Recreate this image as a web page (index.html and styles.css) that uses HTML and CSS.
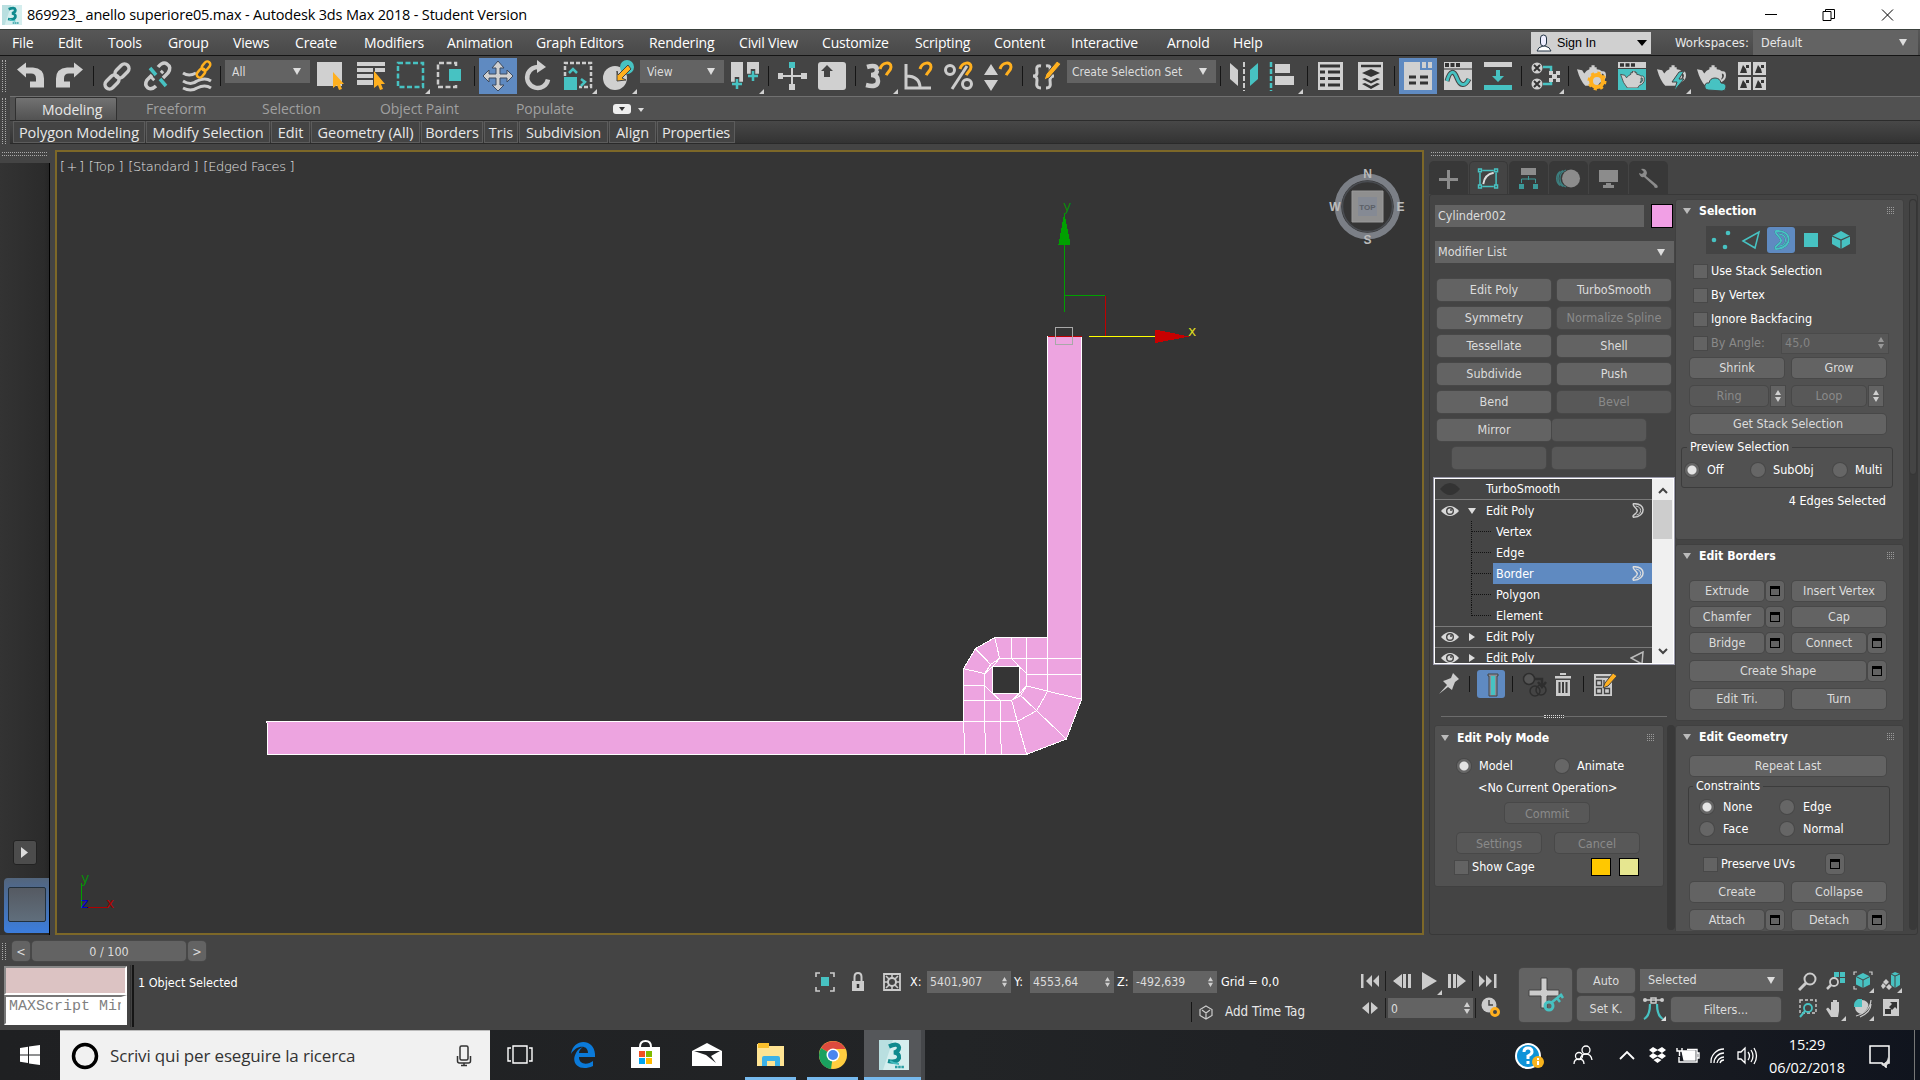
FILE: index.html
```html
<!DOCTYPE html>
<html lang="en">
<head>
<meta charset="utf-8">
<title>869923_ anello superiore05.max - Autodesk 3ds Max 2018 - Student Version</title>
<link rel="stylesheet" href="styles.css">
</head>
<body>
<svg class="defs" width="0" height="0">
  <symbol id="magnet" viewBox="0 0 16 18"><path d="M2 8C4 1 13 0 13 6c0 4-4 5-5 9" fill="none" stroke="#ffb01f" stroke-width="3"/><path d="M0 9l4 1M6 14l4 1.500" stroke="#454545" stroke-width="1.200"/></symbol>
  <symbol id="teapot" viewBox="0 0 28 20"><path fill-rule="evenodd" d="M0 4l5 1 2 3q2-3 5-4V2h2V0h3v2h2v2q3 0 5 2 4-1 4 4 0 5-6 7l-2 3H8Q3 15 0 4zM24 8q2 0 2 2 0 3-3 4 2-3 1-6z"/></symbol>
  <symbol id="border" viewBox="0 0 16 20"><path d="M2 1c17-1 17 17 0 18C-1 16 8 14 7 10S0 4 2 1z" fill="none" stroke-width="2"/><path d="M5 4c9 1 8 11 1 12" fill="none" stroke-width="1.300"/></symbol>
  <symbol id="eye" viewBox="0 0 18 10"><path d="M0 5Q9-5 18 5 9 15 0 5z" fill="#d8d8d8"/><circle cx="9" cy="5" r="4" fill="#444"/><circle cx="9" cy="5" r="2.600" fill="#d8d8d8"/><circle cx="10" cy="4" r="1" fill="#444"/></symbol>
  <symbol id="spin" viewBox="0 0 6 12"><path d="M0 5l3-5 3 5zM0 7l3 5 3-5z" fill="#d0d0d0"/></symbol>
  <symbol id="max" viewBox="0 0 30 30"><path d="M0 0h30v30H0z" fill="#d5eeee"/><path d="M0 0h14L4 30H0z" fill="#b9dfe0"/><path d="M10 6.500q9-4 10 1 0 4-5 5 6 1 5 5.500-2 5-11 3" fill="none" stroke="#108a8e" stroke-width="4.200"/><path d="M11 21q4 3 9 3" stroke="#45bcbf" stroke-width="2" fill="none"/><path d="M16 27h9" stroke="#2a9ea2" stroke-width="2.500" stroke-dasharray="2.500 .7"/></symbol>
</svg>

<header class="titlebar">
  <svg class="app-icon" width="20" height="20"><use href="#max"/></svg>
  <span class="title">869923_ anello superiore05.max - Autodesk 3ds Max 2018 - Student Version</span>
  <svg class="win-buttons" width="140" height="28" fill="none" stroke="#000"><path d="M5 13.500h12M63 10.500h8v9h-8zM65.500 10V8.500h9v9H71M122 8.500l11 11M133 8.500l-11 11"/></svg>
</header>

<nav class="menubar">
  <div class="menus"><span>File</span><span>Edit</span><span>Tools</span><span>Group</span><span>Views</span><span>Create</span><span>Modifiers</span><span>Animation</span><span>Graph Editors</span><span>Rendering</span><span>Civil View</span><span>Customize</span><span>Scripting</span><span>Content</span><span>Interactive</span><span>Arnold</span><span>Help</span></div>
  <div class="signin"><svg width="16" height="18"><path d="M1 17q1-4 6-5h2q5 1 6 5z" fill="#fff" stroke="#234"/><rect x="4.500" y="1" width="6" height="11" rx="3" fill="#eef" stroke="#234"/></svg><span>Sign In</span><i class="tri black"></i></div>
  <span class="ws-label">Workspaces:</span>
  <div class="workspace"><span>Default</span><i class="tri"></i></div>
</nav>

<div class="toolbar">
  <i class="vgrip"></i>
  <svg class="tool" viewBox="0 0 40 40"><path d="M7 12.500l9-7v5h7q11 1 11 11v9H28h-8v-6h6v-3q0-5-5-5h-5v4z" transform="translate(0 1)"/></svg>
  <svg class="tool" viewBox="0 0 40 40"><path d="M7 12.500l9-7v5h7q11 1 11 11v9H28h-8v-6h6v-3q0-5-5-5h-5v4z" transform="matrix(-1 0 0 1 40 1)"/></svg>
  <i class="sep"></i>
  <svg class="tool" viewBox="0 0 40 40"><g class="ln" stroke-width="3.500"><rect x="-8" y="-4.500" width="16" height="9" rx="4.500" transform="translate(15 26) rotate(-45)"/><rect x="-8" y="-4.500" width="16" height="9" rx="4.500" transform="translate(25 15) rotate(-45)"/></g></svg>
  <svg class="tool" viewBox="0 0 40 40"><g class="ln" stroke-width="3.500"><path d="M19 30q-4 4-8 2-4-3-1-8l5-5M21 11q5-6 9-3 5 3 1 9l-5 5M15 24l2-2M24 17l2-2"/><path class="tls" d="M13 12l6 7M23 23l6 7"/></g></svg>
  <svg class="tool" viewBox="0 0 40 40"><g class="ln" stroke-width="3"><path d="M6 17q6 4 13 0M6 25q8 5 14 0 8-4 14 0M6 32q8 4 14 0 8-4 14 0"/><g stroke="#ffb01f" stroke-width="2.500"><rect x="-5" y="-3" width="10" height="6" rx="3" transform="translate(24 17) rotate(-50)"/><rect x="-5" y="-3" width="10" height="6" rx="3" transform="translate(29 10) rotate(-50)"/></g></g></svg>
  <i class="sep"></i>
  <div class="drop d-all"><span>All</span><i class="tri"></i></div>
  <svg class="tool" viewBox="0 0 40 40"><path d="M6 6h25v24H6z"/><path class="or" d="M22 16v16l4-3 2 5 3-1-2-5h4z"/></svg>
  <svg class="tool" viewBox="0 0 40 40"><path d="M6 6h28v4H6zM6 12h16v4H6zM6 18h16v4H6zM6 24h16v5H6zM24 12h10v4H24z"/><path class="or" d="M23 15v17l4-3 2 5 3-1-2-5h4z"/></svg>
  <svg class="tool" viewBox="0 0 40 40"><path class="tls" d="M7 7h25v24H7z" stroke-width="2.500" stroke-dasharray="5 2.500"/><path d="M34 38h5v-5z"/></svg>
  <svg class="tool" viewBox="0 0 40 40"><path class="ln" d="M25 10V7H7v24h18v-4" stroke-width="2.500" stroke-dasharray="5 2.500"/><path class="tl" d="M18 13h12v12H18z"/></svg>
  <i class="sep"></i>
  <svg class="tool on" viewBox="0 0 40 40"><path d="M20 5l6 7h-4v6h7v-4l6 6-6 6v-4h-7v7h4l-6 6-6-6h4v-7h-7v4l-6-6 6-6v4h7v-6h-4z" stroke="#3c4a60"/></svg>
  <svg class="tool" viewBox="0 0 40 40"><path class="ln" d="M23 11.500a10.500 10.500 0 1 0 7 12" stroke-width="4.500"/><path d="M19 4l9 7-9 6z"/></svg>
  <svg class="tool" viewBox="0 0 40 40"><path class="ln" d="M7 20V7h26v24H21" stroke-width="2.500" stroke-dasharray="4 2"/><path class="tl" d="M6 21h13v13H6z"/><path class="tls" d="M11 17l4-4 4 4M23 23l4 3-4 4" stroke-width="2.500"/><path d="M34 38h5v-5z"/></svg>
  <svg class="tool" viewBox="0 0 40 40"><circle cx="17" cy="22" r="12"/><circle class="tl" cx="29" cy="11" r="7"/><path class="or" d="M30 9L20 19l-1-4v10l9-1-4-2 9-9z" stroke="#444"/><path d="M34 38h5v-5z"/></svg>
  <div class="drop d-view"><span>View</span><i class="tri"></i></div>
  <svg class="tool" viewBox="0 0 40 40"><path d="M6 6h12v21H6zM22 6h12v14H22z"/><path d="M12 21v14M6 28h12M28 13v14M22 20h12" fill="none" stroke="#444" stroke-width="4.500"/><path class="tls" d="M12 23v10M7 28h10M28 15v10M23 20h10" stroke-width="2.500"/><path d="M34 38h5v-5z"/></svg>
  <i class="sep"></i>
  <svg class="tool" viewBox="0 0 40 40"><path d="M6 17h5v2h8v-7h2v7h8v-2h6v6h-6v-2h-8v7h2v6h-6v-6h2v-7h-8v2H6z"/><path class="tl" d="M17 6h6v6h-6z"/></svg>
  <svg class="tool" viewBox="0 0 40 40"><rect x="6" y="6" width="28" height="28" rx="3"/><path d="M9 15l6-6 6 6h-3v6h-6v-6z" fill="#444"/></svg>
  <i class="sep"></i>
  <svg class="tool" viewBox="0 0 40 40"><path class="ln" d="M8 11q10-3 10 3 0 5-6 5 7 0 7 6 0 7-12 4" stroke-width="4.500"/><use href="#magnet" x="19" y="5" width="16" height="18"/><path d="M34 38h5v-5z"/></svg>
  <svg class="tool" viewBox="0 0 40 40"><path class="ln" d="M7 8v24h25M7 20q14 0 14 12" stroke-width="3"/><use href="#magnet" x="19" y="5" width="16" height="18"/></svg>
  <svg class="tool" viewBox="0 0 40 40"><g class="ln" stroke-width="3"><circle cx="11" cy="14" r="4.500"/><circle cx="28" cy="28" r="4.500"/><path d="M28 10L13 33"/></g><use href="#magnet" x="19" y="5" width="16" height="18"/></svg>
  <svg class="tool" viewBox="0 0 40 40"><path d="M5 19l7-11 7 11zM5 24h14l-7 11z"/><use href="#magnet" x="19" y="5" width="16" height="18"/></svg>
  <i class="sep"></i>
  <svg class="tool" viewBox="0 0 40 40"><path class="ln" d="M15 10c-6-1-4 4-4 7 0 2-2 3-4 3 2 0 4 1 4 4 0 3-2 8 4 8M20 10c6-1 4 4 4 7 0 2 2 3 4 3-2 0-4 1-4 4 0 3 2 8-4 8" stroke-width="3"/><path class="or" d="M31 5l4 3-12 14-5 2 2-6z" stroke="#444"/></svg>
  <div class="drop d-set"><span>Create Selection Set</span><i class="tri"></i></div>
  <i class="sep"></i>
  <svg class="tool" viewBox="0 0 40 40"><path d="M6 7l8 7v16l-8-7z"/><path class="tl" d="M34 7l-8 7v16l8-7z"/><path class="ln" d="M20 6v29" stroke-width="2" stroke-dasharray="5 2"/></svg>
  <svg class="tool" viewBox="0 0 40 40"><path class="tls" d="M7 6v29" stroke-width="2.500" stroke-dasharray="5 2"/><path d="M11 8h15v9H11zM11 20h19v9H11z"/><path d="M34 38h5v-5z"/></svg>
  <i class="sep"></i>
  <svg class="tool" viewBox="0 0 40 40"><path d="M7 6h25v28H7z"/><path class="dk" d="M9 10h20M9 16h5M17 16h12M9 22.500h5M17 22.500h12M9 29h5M17 29h12" stroke-width="3"/></svg>
  <svg class="tool" viewBox="0 0 40 40"><path d="M7 6h25v28H7z"/><path class="dk" d="M10 10h20" stroke-width="2.500"/><path d="M11 17l9-4 9 4-9 4zM11 23l3-1 6 3 6-3 3 1-9 4.500zM11 28l3-1 6 3 6-3 3 1-9 5z" fill="#333"/></svg>
  <i class="sep"></i>
  <svg class="tool on" viewBox="0 0 40 40"><path d="M6 6h16v8h12v20H6z"/><path d="M24 6h4v6h-4zM30 6h4v6h-4z"/><path class="dk" d="M11 21h7M22 21h8M11 27h7M22 27h8" stroke-width="3"/></svg>
  <svg class="tool" viewBox="0 0 40 40"><path d="M6 6h28v28H6z"/><path class="dk" d="M7 9h16" stroke-width="4" stroke-dasharray="4 1.500"/><path class="dk" d="M6 13h28" stroke-width="1"/><path d="M9 25c3-11 7-11 10-3s8 9 12 1" fill="none" stroke="#444" stroke-width="5"/><path class="tls" d="M9 25c3-11 7-11 10-3s8 9 12 1" stroke-width="3"/></svg>
  <svg class="tool" viewBox="0 0 40 40"><path d="M6 6h28v5H6z"/><path class="tl" d="M6 29h28v5H6zM18 14h4v6h4l-6 6-6-6h4z"/></svg>
  <i class="sep"></i>
  <svg class="tool" viewBox="0 0 40 40"><circle cx="12" cy="12" r="5.500"/><circle cx="12" cy="28" r="5.500"/><path class="dk" d="M9 9l6 6M15 9l-6 6M9 25l6 6M15 25l-6 6" stroke-width="2"/><path class="tls" d="M18 11h8v5M18 28h8v-4" stroke-width="2.500"/><path d="M24 15h4v3h3v-3h4v4h-3v3h3v4h-4v-3h-3v3h-4v-4h3v-3h-3z"/><path d="M34 38h5v-5z"/></svg>
  <i class="sep"></i>
  <svg class="tool" viewBox="0 0 40 40"><use href="#teapot" x="5" y="9" width="29" height="21"/><circle cx="25" cy="25" r="6" fill="none" stroke="#ffb01f" stroke-width="4"/><circle cx="25" cy="25" r="8" fill="none" stroke="#ffb01f" stroke-width="3" stroke-dasharray="3 3.300"/></svg>
  <svg class="tool" viewBox="0 0 40 40"><path d="M6 6h28v6H6z"/><path class="dk" d="M8 9h15" stroke-width="3.500" stroke-dasharray="4 1.500"/><path class="tl" d="M6 13h28v21H6z"/><use href="#teapot" x="8" y="15" width="25" height="17" stroke="#444"/></svg>
  <svg class="tool" viewBox="0 0 40 40"><use href="#teapot" x="5" y="9" width="29" height="21"/><path class="tl" d="M27 16l-7 10h5l-3 9 10-12h-5l5-8z" stroke="#444"/><path d="M34 38h5v-5z"/></svg>
  <svg class="tool" viewBox="0 0 40 40"><use href="#teapot" x="5" y="9" width="29" height="21"/><path class="tl" d="M16 34q-4-1-3-5 1-3 4-2 1-5 6-5t6 5q5 0 5 4t-4 4z" stroke="#444"/></svg>
  <svg class="tool" viewBox="0 0 40 40"><path d="M6 6h13v13H6zM21 6h13v13H21zM6 21h13v13H6zM21 21h13v13H21z"/><path d="M8 17l3-8 3 4 1 4zM23 17l3-8 3 4 1 4zM8 32l3-8 3 4 1 4zM23 32l3-8 3 4 1 4zM14 9h3v3h-3zM29 9h3v3h-3zM14 24h3v3h-3zM29 24h3v3h-3z" fill="#333"/></svg>
</div>

<div class="ribbon">
  <i class="vgrip"></i>
  <div class="ribbon-body">
    <div class="tabs"><span class="active">Modeling</span><span>Freeform</span><span>Selection</span><span>Object Paint</span><span>Populate</span><i class="pill"><i></i></i><i class="tri sm"></i></div>
    <div class="panels"><span>Polygon Modeling</span><span>Modify Selection</span><span>Edit</span><span>Geometry (All)</span><span>Borders</span><span>Tris</span><span>Subdivision</span><span>Align</span><span>Properties</span></div>
  </div>
</div>

<main class="main">
  <aside class="left">
    <i class="hgrip"></i>
    <div class="left-body">
      <div class="play-btn"><svg width="8" height="12"><path d="M0 0l7 5.500L0 11z" fill="#ddd"/></svg></div>
      <div class="layout-btn"><i></i></div>
    </div>
  </aside>
  <section class="viewport">
    <div class="vp-label"><span class="plus">[ + ]</span><span>[Top ]</span><span>[Standard ]</span><span>[Edged Faces ]</span></div>
    <svg class="scene" viewBox="57 152 1365 781" width="1365" height="781">
      <g transform="translate(930 180) scale(.33333 .38265)" shape-rendering="crispEdges" stroke-width="1">
        <path fill="#eda4e0" stroke="#fff" fill-rule="evenodd" vector-effect="non-scaling-stroke" d="M353 409H455V1357L409 1461 290 1501H-1987V1430L-1990 1415H101V1277L136 1225 194 1196H353zM188 1272V1342H268V1272z"/>
        <path fill="none" stroke="#fff" vector-effect="non-scaling-stroke" d="M244 1196V1250L268 1272 290 1290M290 1196V1322M353 1196V1336M194 1196L209 1250H455M290 1293H455M136 1225L182 1266M101 1277L164 1290 182 1266 209 1250 188 1272 164 1290V1415L167 1501M101 1321H164L188 1342 211 1360V1415L214 1501M101 1360H245L268 1342 290 1322 272 1347 245 1360 262 1415 290 1501M101 1415H262L320 1387 353 1336M101 1415L104 1501M272 1347L320 1387 409 1461M290 1322L353 1336 455 1357"/>
        <path fill="none" stroke="#c00000" vector-effect="non-scaling-stroke" d="M353 409H455M526 302V409"/>
        <path fill="none" stroke="#00a000" vector-effect="non-scaling-stroke" d="M403 171V345M403 302H525"/>
        <path fill="none" stroke="#ff0" vector-effect="non-scaling-stroke" d="M477 409H676"/>
        <path fill="none" stroke="#a8a8a8" vector-effect="non-scaling-stroke" d="M376 385H428V430H376z"/>
        <path fill="#00a000" d="M403 85L385 171H422z"/><path fill="#c80000" d="M676 391V426L778 409z"/>
      </g>
      <g class="axis"><text x="1063" y="211" fill="#0b8a0b">y</text><text x="1188" y="336" fill="#d8d820">x</text>
      <path d="M81.500 883v25" stroke="#00a000"/><path d="M82 907.500h26" stroke="#b00000"/><text x="81" y="883" fill="#0b8a0b">y</text><text x="106" y="908" fill="#b00000">x</text><text x="81" y="908" fill="#0000d0">z</text></g>
      <g><circle cx="1367.500" cy="206.500" r="29.500" fill="none" stroke="#7b7f86" stroke-width="6.500"/><circle cx="1367.500" cy="206.500" r="25" fill="none" stroke="#4a4d52" stroke-width="1.500"/><path d="M1352 191h31v31h-31z" fill="#8f8f8f" stroke="#9a9a9a"/><path d="M1358 197h19v19h-19z" fill="#858a94"/><text class="cube" x="1367.500" y="209.500" text-anchor="middle">TOP</text>
      <g class="compass" text-anchor="middle"><text x="1367.500" y="178">N</text><text x="1367.500" y="243.500">S</text><text x="1335" y="211">W</text><text x="1400.500" y="211">E</text></g></g>
    </svg>
  </section>
  <aside class="command">
    <i class="hgrip"></i>
    <div class="cmd-tabs">
      <svg viewBox="0 0 39 33"><path d="M18 8h3v8h8v3h-8v8h-3v-8h-8v-3h8z" transform="translate(0 1)"/></svg>
      <svg class="active" viewBox="0 0 39 33"><g transform="translate(1 1)"><g class="tls" stroke-width="1.600"><path d="M8 6h3v3H8zM25 6h3v3h-3zM8 23h3v3H8zM25 23h3v3h-3zM12 7.500h12M12 24.500h12M9.500 10v12M26.500 10v12"/></g><path d="M13 22q1-10 11-12" fill="none" stroke="#ddd" stroke-width="2"/></g></svg>
      <svg viewBox="0 0 39 33"><path d="M12 7h15v7H12z"/><path d="M10 23h5v5h-5zM24 23h5v5h-5z" fill="#3c9a99"/><path d="M19.500 15v4M12.500 22v-4h14v4" fill="none" stroke="#3c9a99"/></svg>
      <svg viewBox="0 0 39 33"><circle cx="22" cy="17.500" r="9"/><path d="M14 9.500a9 9 0 0 0 0 16M11 10.500a9 9 0 0 0 0 14M17 9a9 9 0 0 0 0 17" fill="none" stroke="#3c7e7e" stroke-width="1.300"/></svg>
      <svg viewBox="0 0 39 33"><path d="M10 9h19v12H10zM17 22h5v2h3v3H14v-3h3z"/></svg>
      <svg viewBox="0 0 39 33"><path d="M12 8q5-1 6 4l-1 3 11 9q2 3-1 3-2 0-2-2L15 16q-4 1-5-4l3 1 2-2z"/></svg>
    </div>
    <div class="cmd-body">
      <div class="mod-col">
        <div class="name-row"><div class="field">Cylinder002</div><i class="swatch pink"></i></div>
        <div class="modlist"><span>Modifier List</span><i class="tri"></i></div>
        <div class="mod-buttons">
          <b>Edit Poly</b><b>TurboSmooth</b><b>Symmetry</b><b class="off">Normalize Spline</b><b>Tessellate</b><b>Shell</b><b>Subdivide</b><b>Push</b><b>Bend</b><b class="off">Bevel</b>
        </div>
        <div class="mod-row r6"><b>Mirror</b><b class="off"></b></div>
        <div class="mod-row r7"><b class="off"></b><b class="off"></b></div>
        <div class="stack">
          <div class="stack-list">
            <div class="st"><svg width="20" height="12" viewBox="0 0 20 12"><path d="M0 6Q10-6 20 6 10 18 0 6z" fill="#333"/></svg><span>TurboSmooth</span></div>
            <div class="st"><svg width="18" height="10"><use href="#eye"/></svg><i class="tri sm"></i><span>Edit Poly</span><svg class="sub-ic" width="12" height="15"><use href="#border" stroke="#ccc"/></svg></div>
            <div class="tree">
              <div><i></i><span>Vertex</span></div><div><i></i><span>Edge</span></div><div class="sel"><i></i><span>Border</span><svg class="sub-ic" width="12" height="15"><use href="#border" stroke="#ddd"/></svg></div><div><i></i><span>Polygon</span></div><div><i></i><span>Element</span></div>
            </div>
            <div class="st top"><svg width="18" height="10"><use href="#eye"/></svg><i class="tri right"></i><span>Edit Poly</span></div>
            <div class="st top"><svg width="18" height="10"><use href="#eye"/></svg><i class="tri right"></i><span>Edit Poly</span><svg class="sub-ic" width="14" height="14"><path d="M1 7l12-6-1 12z" fill="none" stroke="#bbb" stroke-width="1.500"/></svg></div>
          </div>
          <div class="stack-scroll"><svg width="10" height="7"><path d="M1 6l4-4 4 4" fill="none" stroke="#444" stroke-width="2"/></svg><i></i><svg width="10" height="7"><path d="M1 1l4 4 4-4" fill="none" stroke="#444" stroke-width="2"/></svg></div>
        </div>
        <div class="stack-tools">
          <svg width="30" height="28"><path d="M0 24l8-9-4-4 3-1 5-2 2-5 6 6-4 3-2 5-1 3-4-3z" fill="#ccc"/></svg>
          <i class="sep"></i>
          <svg class="on" width="28" height="28"><path d="M11 4h10v2h-1v20h-8V6h-1z" fill="#8a8f98" stroke="#444"/><path d="M14 6h4v19h-4z" fill="#47c2c2"/></svg>
          <i class="sep"></i>
          <svg width="40" height="28"><g fill="none" stroke="#2e2e2e" stroke-width="1.500"><circle cx="9" cy="9" r="5.500" fill="#555"/><circle cx="15" cy="21" r="5"/><circle cx="21" cy="20" r="5"/><path d="M14 9h8v7M18 12l4 5 4-5" stroke-width="2.500"/></g></svg>
          <svg width="28" height="28"><path d="M2 6h16v2.500H2zM7 3h6v2H7zM3 10h14v16H3z" fill="#ccc"/><path d="M6.500 12v11M10 12v11M13.500 12v11" stroke="#3d3d3d" stroke-width="2"/></svg>
          <i class="sep"></i>
          <svg width="30" height="28"><g transform="translate(1 0)"><path d="M3 4h18v22H3z" fill="#ccc"/><path d="M5 7h14M5.500 10.500h5v5h-5zM5.500 18.500h5v5h-5zM13.500 18.500h5v5h-5zM13 10v6" fill="none" stroke="#444" stroke-width="1.300"/><path d="M22 3l4 3-9 10-5 2 2-5z" fill="#ffb01f" stroke="#444"/></g></svg>
        </div>
        <div class="splitter"><i></i></div>
        <div class="rollup poly-mode">
          <h3><i class="tri sm"></i>Edit Poly Mode<i class="dots"></i></h3>
          <div class="row pm1"><i class="radio on"></i><span>Model</span><i class="radio"></i><span>Animate</span></div>
          <div class="row pm2">&lt;No Current Operation&gt;</div>
          <div class="row pm3"><b class="off">Commit</b></div>
          <div class="row pm4"><b class="off">Settings</b><b class="off">Cancel</b></div>
          <div class="row pm5"><i class="check"></i><span>Show Cage</span><i class="swatch gold"></i><i class="swatch pale"></i></div>
        </div>
      </div>
      <i class="mid-scroll"></i>
      <div class="roll-col">
        <div class="rollup r-sel">
          <h3><i class="tri sm"></i>Selection<i class="dots"></i></h3>
          <div class="sub-icons">
            <svg viewBox="0 0 30 28"><g class="tl"><circle cx="8" cy="14" r="2.300"/><circle cx="22" cy="7" r="2.300"/><circle cx="19" cy="21" r="2.300"/></g></svg>
            <svg viewBox="0 0 30 28"><path class="tls" d="M7 15L23 6l-4 16z" stroke-width="1.500"/></svg>
            <svg class="on" viewBox="0 0 28 26"><use href="#border" x="6" y="3" width="18" height="20" stroke="#2c4a60" stroke-width="4"/><use href="#border" x="6" y="3" width="18" height="20" stroke="#47c2c2"/></svg>
            <svg viewBox="0 0 30 28"><path class="tl" d="M8 7h14v14H8z"/></svg>
            <svg viewBox="0 0 30 28"><path class="tl" d="M15 5l9 5v8l-9 5-9-5v-8z"/><path d="M6 10l9 4 9-4M15 14v9" fill="none" stroke="#444" stroke-width="1.200"/></svg>
          </div>
          <div class="row ck"><i class="check"></i><span>Use Stack Selection</span></div>
          <div class="row ck"><i class="check"></i><span>By Vertex</span></div>
          <div class="row ck"><i class="check"></i><span>Ignore Backfacing</span></div>
          <div class="row ck dim"><i class="check"></i><span>By Angle:</span><div class="angle"><span>45,0</span><svg width="6" height="12"><use href="#spin"/></svg></div></div>
          <div class="row bt s1"><b class="w94">Shrink</b><b class="w94">Grow</b></div>
          <div class="row bt s2"><b class="off w78">Ring</b><b class="spin"><svg width="6" height="12"><use href="#spin"/></svg></b><b class="off w74">Loop</b><b class="spin"><svg width="6" height="12"><use href="#spin"/></svg></b></div>
          <div class="row bt s3"><b class="w196">Get Stack Selection</b></div>
          <fieldset class="preview"><legend>Preview Selection</legend><i class="radio on"></i><span>Off</span><i class="radio"></i><span>SubObj</span><i class="radio"></i><span>Multi</span></fieldset>
          <div class="edges">4 Edges Selected</div>
        </div>
        <div class="rollup r-borders">
          <h3><i class="tri sm"></i>Edit Borders<i class="dots"></i></h3>
          <div class="row bt"><b class="w74">Extrude</b><b class="opt"><i></i></b><b class="w94">Insert Vertex</b></div>
          <div class="row bt"><b class="w74">Chamfer</b><b class="opt"><i></i></b><b class="w94">Cap</b></div>
          <div class="row bt"><b class="w74">Bridge</b><b class="opt"><i></i></b><b class="w74">Connect</b><b class="opt"><i></i></b></div>
          <div class="row bt wide"><b class="w176">Create Shape</b><b class="opt"><i></i></b></div>
          <div class="row bt wide"><b class="w94">Edit Tri.</b><b class="w94">Turn</b></div>
        </div>
        <div class="rollup r-geo">
          <h3><i class="tri sm"></i>Edit Geometry<i class="dots"></i></h3>
          <div class="row bt g1"><b class="w196">Repeat Last</b></div>
          <fieldset class="constraints"><legend>Constraints</legend><i class="radio on"></i><span>None</span><i class="radio"></i><span>Edge</span><i class="radio"></i><span>Face</span><i class="radio"></i><span>Normal</span></fieldset>
          <div class="row g2"><i class="check"></i><span>Preserve UVs</span><b class="opt"><i></i></b></div>
          <div class="row bt g3"><b class="w94">Create</b><b class="w94">Collapse</b></div>
          <div class="row bt g4"><b class="w74">Attach</b><b class="opt"><i></i></b><b class="w74">Detach</b><b class="opt"><i></i></b></div>
        </div>
      </div>
      <div class="far-scroll"><i></i></div>
    </div>
  </aside>
</main>

<div class="timeline"><i class="vgrip"></i><b class="nudge">&lt;</b><b class="slider">0 / 100</b><b class="nudge">&gt;</b></div>

<footer class="status">
  <div class="listener"><div class="macro"></div><div class="mini">MAXScript Mini</div></div>
  <i class="divider"></i>
  <div class="prompt">1 Object Selected</div>
  <div class="coords">
    <div class="coord-row">
      <svg width="20" height="20"><path class="tl" d="M6 5h8v9H6z"/><path d="M1 5V1h4M15 1h4v4M19 15v4h-4M5 19H1v-4" fill="none" stroke="#ccc" stroke-width="1.600"/></svg>
      <svg width="14" height="20"><path d="M1 9h12v10H1z" fill="#ccc"/><path d="M3.500 9V5q0-4 3.500-4t3.500 4v4" fill="none" stroke="#ccc" stroke-width="2"/><path d="M7 12v4" stroke="#333" stroke-width="2.500"/></svg>
      <svg width="18" height="18"><path d="M1 1h16v16H1z" fill="none" stroke="#ccc" stroke-width="1.800"/><path d="M9 1v16M1 9h16M3 3l3 3M15 3l-3 3M3 15l3-3M15 15l-3-3" stroke="#ccc" stroke-width="1.600"/><circle cx="9" cy="9" r="4" fill="#444" stroke="#ccc" stroke-width="2"/></svg>
      <span class="lab">X:</span><div class="num"><span>5401,907</span><svg width="5" height="12"><use href="#spin"/></svg></div>
      <span class="lab">Y:</span><div class="num"><span>4553,64</span><svg width="5" height="12"><use href="#spin"/></svg></div>
      <span class="lab">Z:</span><div class="num"><span>-492,639</span><svg width="5" height="12"><use href="#spin"/></svg></div>
      <span class="grid-lab">Grid = 0,0</span>
    </div>
    <div class="tag-row"><i></i><svg width="14" height="15"><path d="M7 1l6 3.500v6L7 14l-6-3.500v-6zM3 5l4 3 4-3M7 8v6" fill="none" stroke="#ccc" stroke-width="1.200"/></svg><span>Add Time Tag</span></div>
  </div>
  <div class="play">
    <svg width="146" height="64" fill="#ccc"><path d="M1 14h2.500v14H1zM12 15v12l-6-6zM19 15v12l-6-6zM42 14v14l-9-7zM43 14h3v14h-3zM48 14h3v14h-3zM62 12l15 9-15 9zM77 35h5v-5zM88 14h3v14h-3zM93 14h3v14h-3zM97 14v14l9-7zM119 15v12l6-6zM126 15v12l6-6zM134 14h2.500v14H134z"/><path d="M25.500 11v20M112.500 11v20M25.500 38v20M115.500 38v20" stroke="#1d1d1d"/><path d="M9 42v12l-7-6zM11 42v12l7-6z"/><path d="M28 38h85v20H28z" fill="#636363"/><use href="#spin" x="104" y="42" width="6" height="12"/><circle cx="129" cy="45" r="7.500"/><path d="M129 40v5h4" fill="none" stroke="#444" stroke-width="1.500"/><circle cx="135" cy="52" r="3.500" fill="#444" stroke="#ffb01f" stroke-width="3"/><text class="t" x="31" y="52.500">0</text></svg>
  </div>
  <div class="keys">
    <b class="bigkey"><svg width="53" height="54"><path d="M22 10h6v12h12v6H28v12h-6V28H10v-6h12z" fill="#ccc" stroke="#444" stroke-width="1"/><circle cx="30" cy="38" r="4" fill="none" stroke="#47c2c2" stroke-width="3"/><path d="M32 35l11-9M38 30l3 4M42 27l2 3" stroke="#47c2c2" stroke-width="2.500"/></svg></b>
    <div class="k1"><b>Auto</b><b>Set K.</b></div>
    <div class="k2"><div class="drop2"><span>Selected</span><i class="tri"></i></div>
      <div class="k3"><svg width="24" height="24"><path class="tls" d="M1 22q6-3 6-15M20 22q-6-3-6-15" stroke-width="2.200"/><path d="M1 3h18M8 1h5v5H8z" fill="#444" stroke="#ccc" stroke-width="1.500"/><circle cx="2" cy="3" r="2" fill="#ccc"/><circle cx="19" cy="3" r="2" fill="#ccc"/><path d="M18 24h5v-5z" fill="#ddd"/></svg><b>Filters...</b></div></div>
  </div>
  <svg class="nav" width="112" height="56" viewBox="0 0 112 56"><g fill="#ccc"><circle cx="12" cy="9" r="5.500" fill="none" stroke="#ccc" stroke-width="2"/><path d="M8 13l-7 7" stroke="#ccc" stroke-width="3"/>
    <path class="tl" d="M36 2h5v5h-5zM42 2h5v5h-5zM42 8h5v5h-5z"/><circle cx="36" cy="12" r="4" fill="#444" stroke="#ccc" stroke-width="1.800"/><path d="M33 15l-4 4" stroke="#ccc" stroke-width="2.500"/>
    <path class="tl" d="M65 3l7 3.500v8L65 18l-7-3.500v-8z"/><path d="M58 6.500l7 3.500 7-3.500M65 10v8" fill="none" stroke="#444"/><path d="M56 5V2h3M71 2h3v3M56 16v3h3" fill="none" stroke="#ccc" stroke-width="1.200"/><path d="M71 23h5v-5z"/>
    <path class="tl" d="M97 2l5 2v11l-5 3-4-3V4z"/><path d="M97 6v12M93 4l4 2 5-2" fill="none" stroke="#444"/><path d="M88 9l3 3-3 3-3-3zM91 14l3 3-3 3-3-3zM85 13l3 3-3 3-2-3zM99 23h5v-5z"/>
    <g transform="translate(0 1)"><path d="M2 29h16v13H2z" fill="none" stroke="#ccc" stroke-dasharray="3 2" stroke-width="1.400"/><circle cx="10" cy="37" r="4" fill="#444" stroke="#47c2c2" stroke-width="1.800"/><path d="M7 40l-5 6" stroke="#47c2c2" stroke-width="2"/>
    <path d="M33 46l-5-8 2-1.500 3 3V31h2v6-8h2v8-8h2v8-6h2v9l-1 6zM43 50h5v-5z"/>
    <circle cx="64" cy="36" r="7"/><path class="tl" d="M64 36V28h-4a8 8 0 0 0-4 8z"/><path d="M59 46q13-3 14-17" fill="none" stroke="#444" stroke-width="3"/><path d="M58 45q14-4 15-16M62 46q11-5 11-13" fill="none" stroke="#ccc" stroke-width="1.200"/><path d="M71 50h5v-5z"/>
    <path d="M85 28h16v17H85z"/><path d="M92 31h7v7l-2-2-3 3-3-3 3-3zM87 38h6v5h-6z" fill="#333"/></g></g></svg>
</footer>

<div class="taskbar">
  <svg class="start" width="60" height="50"><path d="M20 18l8-1.200V24.500h-8zM29 16.600L40 15v9.500H29zM20 25.500h8V33l-8-1.200zM29 25.500h11V35l-11-1.600z" fill="#fff"/></svg>
  <div class="search"><svg width="30" height="30"><circle cx="15" cy="15" r="11.500" fill="none" stroke="#000" stroke-width="3.500"/></svg><span>Scrivi qui per eseguire la ricerca</span><svg width="16" height="22"><rect x="4" y="1" width="8" height="14" rx="1.500" fill="none" stroke="#333" stroke-width="1.500"/><path d="M1.500 11v5q0 2 2 2h9q2 0 2-2v-5M8 18v3M5 20.500h6" fill="none" stroke="#333" stroke-width="1.500"/></svg></div>
  <div class="apps">
    <span><svg width="28" height="22"><path d="M6 2h14v17H6zM4 4H1v13h3M22 4h3v13h-3" fill="none" stroke="#fff" stroke-width="1.400"/></svg></span>
    <span><svg width="26" height="28"><path d="M1 13C3-3 24-3 25 13v3H9c0 8 9 8 14 4v5C10 31 0 23 6 12c1-3 4-5 7-6-3 2-4 4-4 6h9c0-9-12-8-17 1z" fill="#0b7ad9"/></svg></span>
    <span><svg width="32" height="32"><path d="M2 8h29v21H2z" fill="#fff"/><path d="M11 8q0-6 5.500-6T22 8" fill="none" stroke="#fff" stroke-width="2"/><path d="M10 12h6v6h-6z" fill="#f25022"/><path d="M17 12h6v6h-6z" fill="#7fba00"/><path d="M10 19h6v6h-6z" fill="#00a4ef"/><path d="M17 19h6v6h-6z" fill="#ffb900"/></svg></span>
    <span><svg width="32" height="28"><path d="M1 10L16 2l15 8v15H1z" fill="#fff"/><path d="M3 10h26L20 15l5 7-10-8z" fill="#202224"/></svg></span>
    <span class="run"><svg width="30" height="28"><path d="M1 3h10l2 2h15v20H1z" fill="#ffe493"/><path d="M2 2h11v5H2z" fill="#f9bf2c"/><path d="M6 25v-8q0-2 2-2h14q2 0 2 2v8h-5v-5h-8v5z" fill="#3db2e8"/></svg></span>
    <span class="run"><svg width="30" height="30"><circle cx="15" cy="15" r="14" fill="#ffcd40"/><path d="M15 15L3 8a14 14 0 0 1 24.500 1H15z" fill="#dd4b3e"/><path d="M15 15L3 8a14 14 0 0 0 10 21z" fill="#1aa15f"/><circle cx="15" cy="15" r="6.500" fill="#fff"/><circle cx="15" cy="15" r="5" fill="#4a86f0"/></svg></span>
    <span class="run cur"><svg width="30" height="30"><use href="#max"/></svg></span>
  </div>
  <div class="tray">
    <svg width="320" height="50" fill="none" stroke="#fff" stroke-width="1.300"><circle cx="18" cy="26" r="12" fill="#0d93d8" stroke="#fff" stroke-width="2"/><path d="M14 22q0-4 4-4t4 4q0 2-4 4v3M18 31v3" stroke-width="3"/><circle cx="28" cy="32" r="6" fill="#f8b31c" stroke="none"/><path d="M28 31v4M28 28v2" stroke-width="2"/>
      <circle cx="76" cy="20" r="4"/><path d="M70 30q1-6 6-6t6 6"/><circle cx="69" cy="26" r="3.500"/><path d="M64 34q0-5 5-5t5 5"/><path d="M110 29l7-7 7 7" stroke-width="1.800"/>
      <path d="M143 17l5 3-5 3-4-3zM152 17l4 3-4 3-5-3zM143 23l5 3-5 3-4-3zM152 23l4 3-4 3-5-3zM147.500 28l4 2-4 3-4-3z" fill="#fff" stroke="none"/>
      <path d="M172 21h13v9h-11z" fill="#fff"/><path d="M169 27v5h18V19.500h-10M187 23h2v5h-2M167 18v3h5v-3M169.500 21v5" stroke-width="1.400"/>
      <path d="M201 33a13 13 0 0 1 13-14M204 33a10 10 0 0 1 10-10M207 33a7 7 0 0 1 7-6M210 33a4 4 0 0 1 4-3"/><path d="M228 22h3l4-4v15l-4-4h-3zM238 22q3 4 0 8M241 20q4 6 0 12M244 18q5 8 0 16"/></svg>
    <div class="clock"><span>15:29</span><span>06/02/2018</span></div>
    <svg class="action" width="24" height="24"><path d="M2 2h19v17h-3v4l-4-4H2z" fill="none" stroke="#fff" stroke-width="1.500"/><path d="M20 13q-1 7-7 7 2 3 5 2 5-3 2-9z" fill="#ddd"/></svg>
    <i class="peek"></i>
  </div>
</div>
</body>
</html>
```
FILE: styles.css
```css
* { box-sizing: border-box; }
body { margin: 0; width: 1920px; height: 1080px; overflow: hidden; display: flex; flex-direction: column; background: #444; color: #e8e8e8; font: 12.5px/16px "DejaVu Sans Condensed", "DejaVu Sans", sans-serif; font-stretch: condensed; }
i, b { font-style: normal; font-weight: normal; display: block; }
svg { display: block; flex: none; }
.defs { position: absolute; }
span { white-space: nowrap; }
.tri { width: 0; height: 0; border: 4px solid transparent; border-top: 7px solid #ddd; border-bottom: 0; flex: none; }
.tri.black { border-top-color: #000; border-width: 6px 5px 0; }
.tri.sm { border-width: 6px 4px 0; }
.tri.right { border-style: solid; border-width: 4px 0 4px 6px; border-color: transparent transparent transparent #ddd; }
.tl { fill: #47c2c2; }
.tls { fill: none; stroke: #47c2c2; }
.or { fill: #ffb01f; }
.ln { fill: none; stroke: #ccc; }
.dk { fill: none; stroke: #333; }

.titlebar { height: 29px; flex: none; background: #fff; color: #000; display: flex; align-items: center; padding-left: 2px; font: 14.5px "Open Sans", sans-serif; }
.app-icon { margin-right: 5px; }
.title { flex: 1; letter-spacing: -.17px; }
.win-buttons { margin-right: 20px; }

.menubar { height: 27px; flex: none; display: flex; align-items: center; background: linear-gradient(#575757, #494949); border-top: 1px solid #3a413d; border-bottom: 1px solid #151515; }
.menus { width: 1531px; padding-left: 12px; display: grid; grid-template-columns: 46px 50px 60px 65px 62px 69px 83px 89px 113px 90px 83px 93px 79px 77px 96px 66px 60px; font: 14px "Open Sans", sans-serif; color: #fff; letter-spacing: -.18px; }
.signin { width: 120px; height: 22px; background: #d0d0d0; color: #000; display: flex; align-items: center; padding: 0 4px 0 5px; gap: 5px; font-family: "Liberation Sans", sans-serif; font-size: 12.5px; }
.signin span { flex: 1; }
.ws-label { width: 102px; padding-left: 24px; font-size: 13px; }
.workspace { flex: 1; height: 25px; background: #636363; display: flex; align-items: center; justify-content: space-between; padding: 0 11px 0 8px; margin-right: 2px; }

.toolbar { height: 40px; flex: none; display: flex; align-items: center; }
.vgrip { width: 4px; margin: 0 4px 0 2px; height: 32px; border: 1px dotted #aaa; border-width: 0 1px; flex: none; }
.tool { width: 40px; height: 40px; fill: #d0d0d0; }
.tool.on { background: radial-gradient(#5f8ac1, #5f8ac1) center/38px 36px no-repeat; border-radius: 4px; }
.sep { width: 1px; height: 20px; background: #151515; margin: 0 3px; flex: none; }
.drop { height: 23px; background: #636363; display: flex; align-items: center; justify-content: space-between; margin: 0 1px 9px; padding: 0 9px 0 7px; color: #ddd; flex: none; font-size: 12px; }
.d-all { width: 85px; } .d-view { width: 84px; margin-left: 2px; } .d-set { width: 149px; padding-left: 5px; }

.ribbon { height: 49px; flex: none; display: flex; }
.ribbon .vgrip { height: 46px; margin-top: 2px; }
.ribbon-body { flex: 1; border-top: 1px solid #707070; }
.tabs { height: 24px; background: #515151; display: flex; align-items: flex-end; border-bottom: 1px solid #2c2c2c; font: 14px/23px "Open Sans", sans-serif; color: #a0a0a0; padding-left: 5px; letter-spacing: -.05px; }
.tabs .active { width: 102px; padding-left: 26px; margin-right: 29px; height: 23px; border: 1px solid #303030; border-bottom: 0; background: linear-gradient(#727272, #525252); color: #e8e8e8; border-radius: 2px 2px 0 0; }
.tabs span:nth-child(2) { width: 116px; } .tabs span:nth-child(3) { width: 118px; } .tabs span:nth-child(4) { width: 136px; } .tabs span:nth-child(5) { width: 97px; }
.pill { width: 18px; height: 10px; background: #eee; border-radius: 3px; align-self: center; padding: 3px 6px; }
.pill i { border: 3px solid transparent; border-top: 4px solid #333; border-bottom: 0; }
.tabs .tri { margin: 0 0 8px 7px; border-width: 4px 3px 0; }
.panels { height: 23px; display: flex; gap: 1px; padding-left: 3px; background: linear-gradient(#484848, #333); border-bottom: 1px solid #2a2a2a; font: 14.5px/21px "Open Sans", sans-serif; }
.panels span { border: 1px solid #5c5c5c; background: #444; text-align: center; width: 132px; letter-spacing: -.02px; }
.panels span:nth-child(2) { width: 124px; } .panels span:nth-child(3) { width: 39px; } .panels span:nth-child(4) { width: 109px; } .panels span:nth-child(5) { width: 62px; } .panels span:nth-child(6) { width: 34px; } .panels span:nth-child(7) { width: 89px; letter-spacing: -.2px; } .panels span:nth-child(8) { width: 47px; } .panels span:nth-child(9) { width: 78px; letter-spacing: -.2px; }

.main { height: 790px; flex: none; display: flex; }
.hgrip { height: 4px; border: 1px dotted #aaa; border-width: 1px 0; }
.left { width: 55px; padding: 7px 5px 0 0; }
.left .hgrip { margin: 0 3px 7px 2px; }
.left-body { height: 772px; background: linear-gradient(90deg, #333, #2b2b2b 90%, #262626); border-right: 1px solid #000; display: flex; flex-direction: column; align-items: flex-end; }
.play-btn { width: 24px; height: 25px; margin: 677px 12px 0 0; background: #4c4c4c; border: 1px solid #222; border-radius: 3px; display: flex; align-items: center; justify-content: center; }
.layout-btn { width: 45px; height: 55px; margin-top: 13px; border-radius: 4px 0 0 4px; background: linear-gradient(#53657c, #3b7ddd); padding: 9px 3px 0 4px; }
.layout-btn i { height: 35px; border: 1px solid #22303c; border-radius: 2px; background: linear-gradient(#555a62, #606e7c); }
.viewport { width: 1369px; height: 785px; margin-top: 5px; border: 2px solid #7d6828; background: #353535; display: grid; }
.viewport > * { grid-area: 1 / 1; }
.vp-label { display: flex; padding: 5px 0 0 3px; gap: 5px; font: 13px/19px "DejaVu Sans Light", "DejaVu Sans", sans-serif; font-weight: 200; letter-spacing: -.3px; color: #e0e0e0; }
.vp-label .plus { word-spacing: -2px; }
.axis { font: 14px "DejaVu Sans"; } .axis path { shape-rendering: crispEdges; }
.cube { font: bold 8px "Liberation Sans"; fill: #5b5f66; }
.compass { font: bold 12px "Liberation Sans"; fill: #bbb; }

.command { width: 496px; padding: 7px 2px 0 5px; }
.command .hgrip { margin-left: 2px; }
.cmd-tabs { height: 38px; display: flex; gap: 1px; padding-top: 5px; }
.cmd-tabs svg { width: 39px; height: 33px; background: #383838; border-radius: 5px 5px 0 0; fill: #8c8c8c; }
.cmd-tabs .active { background: #444; border: 1px solid #383838; border-bottom: 0; }
.cmd-body { height: 741px; border: 1px solid #383838; border-radius: 3px; display: flex; }
.mod-col { width: 237px; padding-left: 4px; }
.name-row { display: flex; justify-content: space-between; margin-top: 9px; padding: 0 2px 0 1px; height: 25px; width: 241px; }
.field { width: 209px; height: 22px; margin-top: 1px; background: #636363; padding: 3px; color: #ddd; }
.swatch { border: 1px solid #000; } .pink { width: 22px; height: 24px; background: #f19fe5; }
.modlist { width: 239px; height: 22px; margin: 12px 0 0 1px; background: #636363; display: flex; align-items: center; justify-content: space-between; padding: 0 9px 0 3px; color: #ddd; }
b { height: 22px; line-height: 21px; border-radius: 4px; background: #636363; box-shadow: 0 0 0 1px #484848; color: #dcdcdc; text-align: center; flex: none; }
b.off { background: #585858; color: #8a8a8a; }
.mod-col > .mod-buttons { display: grid; grid-template-columns: 114px 114px; gap: 6px; margin: 16px 0 0 3px; width: 234px; }
.mod-row { display: flex; margin: 6px 0 0 3px; } .r6 b:first-child { width: 114px; margin-right: 1px; } .r6 b:last-child { width: 94px; }
.r7 { padding-left: 15px; gap: 6px; } .r7 b { width: 94px; }
.stack { width: 240px; height: 186px; margin-top: 9px; border: 1px solid #fff; outline: 1px solid #99a; outline-offset: 0; display: flex; background: #454545; color: #fff; overflow: hidden; }
.stack-list { width: 217px; }
.st { height: 21px; display: flex; align-items: center; padding-left: 6px; border-bottom: 1px solid #7a7a7a; }
.st:nth-child(2) { border: 0; } .st.top { border: 0; border-top: 1px solid #7a7a7a; }
.st .tri { margin-left: 9px; } .st span { margin-left: 10px; flex: 1; } .st .tri.right { margin: 0 1px 0 10px; }
.st:first-child { padding-left: 5px; }
.st:first-child span { margin-left: 26px; } .sub-ic { margin-right: 8px; }
.tree > div { height: 21px; display: flex; align-items: center; padding-left: 36px; }
.tree i { width: 20px; height: 21px; border-left: 1px dotted #111; background: linear-gradient(90deg, #111 50%, transparent 0) 0 10px / 2px 1px repeat-x; margin-right: 1px; }
.tree > div:last-child i { height: 11px; margin-bottom: 10px; }
.tree span { flex: 1; padding: 3px 3px 3px 4px; height: 21px; } .tree .sel { background: linear-gradient(#5f8ac1, #5f8ac1) 58px 0 no-repeat; }
.stack-scroll { flex: 1; background: #f0f0f0; display: flex; flex-direction: column; align-items: center; padding: 8px 1px; }
.stack-scroll i { width: 19px; height: 39px; background: #cdcdcd; margin: 6px 0 auto; }
.stack-tools { height: 28px; margin: 6px 0 0 5px; display: flex; align-items: center; }
.stack-tools .sep { height: 16px; margin: 0 7px 0 0; } .stack-tools .sep:nth-of-type(2) { margin: 0 7px; } .stack-tools .sep:nth-of-type(3) { margin: 0 6px 0 2px; } .stack-tools .on { background: #5f8ac1; border-radius: 3px; } .stack-tools svg:nth-of-type(3) { margin-right: -7px; }
.splitter { width: 226px; margin: 17px 0 0 7px; height: 3px; background: linear-gradient(#6c6c6c, #6c6c6c) 0 1px / 100% 1px no-repeat; }
.splitter i { width: 20px; height: 3px; margin-left: 103px; background: #444; border: 1px dotted #ddd; border-width: 1px 0; }

.rollup { background: #515151; border: 1px solid #404040; border-radius: 3px; color: #fff; }
h3 { margin: 0; display: flex; align-items: center; font-size: 12.2px; line-height: 16px; font-weight: bold; color: #fff; }
h3 .tri { border-top-color: #bbb; margin-right: 8px; }
.dots { width: 8px; height: 8px; margin-left: auto; margin-right: 8px; background: repeating-linear-gradient(90deg, transparent 0 1px, #515151 1px 2px), repeating-linear-gradient(#999 0 1px, #515151 1px 2px); }
.row { display: flex; align-items: center; }
.radio { width: 14px; height: 14px; border-radius: 7px; background: #666; box-shadow: 0 0 0 1px #484848; flex: none; } .radio.on { background: radial-gradient(#e4e4e4 4px, #666 5px); }
.check { width: 13px; height: 13px; background: #636363; box-shadow: 0 0 0 1px #484848; flex: none; }
.poly-mode { width: 230px; height: 162px; margin: 7px 0 0 0; padding: 4px 0 0 6px; }
.pm1 { padding-left: 16px; height: 20px; margin-top: 10px; } .pm1 span { width: 83px; padding-left: 7px; } .pm1 .radio { margin: 0 1px 0 0; }
.poly-mode h3 { height: 16px; }
.pm2 { height: 20px; padding-left: 37px; margin-top: 2px; } .pm3 b { width: 84px; height: 20px; margin-left: 64px; } .pm3 { height: 20px; margin-top: 5px; }
.pm4 { margin: 10px 0 0 16px; gap: 14px; } .pm4 b { width: 84px; height: 20px; } .pm5 { height: 20px; padding-left: 14px; margin-top: 4px; } .pm5 span { flex: 1; padding-left: 4px; } .gold, .pale { width: 20px; height: 18px; background: #ffc800; margin-right: 8px; } .pale { background: #e6e690; margin-right: 24px; }
.mid-scroll { width: 8px; margin: 530px 0 4px 0; background: #393939; border-radius: 4px; }
.roll-col { width: 229px; padding-top: 4px; height: 736px; overflow: hidden; }
.roll-col h3 { padding-left: 7px; height: 16px; }
.roll-col .rollup { width: 229px; }
.r-sel { height: 341px; padding-top: 3px; }
.sub-icons { width: 150px; height: 28px; margin: 7px 0 5px 30px; background: #444; display: flex; align-items: center; } .sub-icons svg { width: 30px; height: 28px; } .sub-icons .on { width: 28px; height: 26px; background: #5f8ac1; border-radius: 3px; margin: 0 1px; }
.ck { height: 24px; padding-left: 18px; } .ck > span { padding-left: 4px; width: 75px; } .dim { color: #8a8a8a; }
.angle { width: 106px; height: 19px; background: #585858; box-shadow: 0 0 0 1px #4a4a4a; display: flex; justify-content: space-between; align-items: center; padding: 0 4px 0 3px; opacity: .9; } .angle svg { opacity: .6; }
.bt { padding-left: 14px; height: 20px; } .bt b { height: 20px; line-height: 20px; }
.w94 { width: 94px; } .w74 { width: 74px; } .w78 { width: 78px; } .w196 { width: 196px; } .w176 { width: 176px; }
.bt .w94 + .w94 { margin-left: 8px; }
.s1 { margin-top: 3px; } .s2 { margin-top: 8px; } .s3 { margin-top: 8px; }
.bt .spin { width: 14px; margin-left: 3px; display: flex; align-items: center; justify-content: center; border-radius: 0; } .s2 .w74 { margin-left: 7px; }
fieldset { margin: 0; padding: 0; min-width: 0; border: 1px solid #3c3c3c; border-radius: 3px; } legend { padding: 0 3px; line-height: 14px; }
.preview { width: 212px; height: 48px; margin: 6px 0 0 5px; display: flex; align-items: center; padding: 0 0 1px 3px; } .preview legend { margin-left: 2px; } .preview span { padding-left: 8px; width: 52px; flex: none; } .preview span:nth-of-type(2) { width: 68px; } .preview span:nth-of-type(3) { width: auto; }
.edges { text-align: right; padding: 5px 17px 0 0; }
.r-borders { height: 177px; margin-top: 4px; padding-top: 3px; } .r-borders .bt { margin-top: 6px; } .r-borders h3 + .bt { margin-top: 17px; } .r-borders .wide { margin-top: 8px; }
.opt { width: 18px; height: 20px; margin-left: 2px; padding: 5px 4px; } .opt i { width: 10px; height: 10px; border: 1px solid #000; border-top-width: 3px; } .opt + b { margin-left: 8px; }
.r-geo { height: 215px; margin-top: 4px; padding-top: 3px; } .g1 { margin-top: 11px; }
.constraints { width: 202px; height: 66px; margin: 3px 0 0 12px; display: grid; grid-template-columns: 16px 64px 16px 90px; grid-auto-rows: 22px; align-content: start; align-items: center; padding: 3px 0 0 11px; } .constraints legend { margin-left: -7px; } .constraints span { padding-left: 7px; }
.g2 { padding-left: 28px; height: 20px; margin-top: 9px; } .g2 span { width: 106px; padding-left: 4px; } .g2 .opt { margin-left: 3px; } .g3 { margin-top: 8px; } .g4 { margin-top: 8px; }
.far-scroll { width: 8px; margin: 4px 0 4px 5px; background: #393939; border-radius: 4px; } .far-scroll i { height: 276px; background: #444; border: 1px solid #353535; border-radius: 4px; }

.timeline { height: 30px; flex: none; display: flex; align-items: center; gap: 2px; padding-top: 2px; } .timeline .vgrip { height: 17px; margin-right: 4px; } .timeline b { height: 20px; line-height: 21px; } .nudge { width: 18px; } .slider { width: 154px; }

.status { flex: 1; display: flex; }
.listener { width: 123px; margin: 1px 0 0 4px; } .macro { height: 29px; background: #dcc3c3; border: 2px solid; border-color: #888 #fff #fff #888; } .mini { height: 30px; background: #fff; border: 2px solid; border-color: #777 #fff #fff #777; color: #808080; font: 15px/20px "Liberation Mono", monospace; overflow: hidden; white-space: nowrap; padding-left: 3px; border-right-width: 6px; }
.divider { width: 4px; margin: 0 4px 3px 3px; border: 1px solid #151515; border-left-color: #333; border-width: 0 2px 0 1px; }
.prompt { width: 677px; padding: 10px 0 0 0; color: #fff; }
.coords { width: 545px; } .coord-row { height: 22px; display: flex; align-items: center; margin-top: 6px; } .coord-row > svg { margin-right: 16px; } .coord-row > svg:nth-child(2) { margin: 0 18px 0 0; } .coord-row > svg:nth-child(3) { margin-right: 9px; }
.lab { width: 17px; color: #fff; } .num { width: 84px; height: 22px; background: #636363; display: flex; align-items: center; justify-content: space-between; padding: 0 4px 0 3px; margin-right: 3px; color: #ddd; font-size: 12.2px; } .num + .lab { width: 16px; } .grid-lab { color: #fff; padding-left: 1px; }
.tag-row { display: flex; align-items: center; height: 20px; margin: 9px 0 0 376px; } .tag-row i { width: 1px; height: 20px; background: #151515; margin-right: 7px; } .tag-row span { margin-left: 12px; font-size: 13.3px; }
.play { width: 159px; margin-top: -5px; } .play .t { fill: #ddd; font-size: 12px; }
.keys { width: 279px; display: flex; gap: 5px; margin-top: 3px; } .bigkey { width: 53px; height: 54px; } .k1 b { width: 58px; height: 25px; line-height: 26px; margin-bottom: 3px; } .drop2 { width: 143px; height: 22px; background: #636363; display: flex; align-items: center; justify-content: space-between; padding: 0 8px; color: #ddd; } .k3 { display: flex; margin-top: 6px; padding-left: 3px; } .k3 b { width: 110px; height: 25px; line-height: 25px; margin-left: 4px; }
.k2 { padding: 1px 0 0 0; } .nav { margin: 5px 0 0 0; }

.taskbar { height: 50px; flex: none; display: flex; background: linear-gradient(90deg, #1f2022, #222426 50%, #1c1e22 80%, #10141e); }
.search { width: 430px; background: #f1f1f1; border-top: 1px solid #bbb; color: #333; display: flex; align-items: center; padding: 0 18px 0 10px; font: 17px "Open Sans", sans-serif; } .search span { flex: 1; padding-left: 10px; letter-spacing: -.15px; }
.apps { display: flex; width: 1020px; } .apps span { width: 62px; height: 50px; display: flex; align-items: center; justify-content: center; } .apps .run { padding-left: 3px; background: linear-gradient(#76b9ed, #76b9ed) 7px 47px / 51px 3px no-repeat; } .apps .run.cur { width: 61px; border-right: 4px solid #45474a; background: linear-gradient(#76b9ed, #76b9ed) 0 47px / 62px 3px no-repeat, #55575a; margin-left: 2px; }
.tray { display: flex; flex: 1; } .tray > svg:first-child { width: 250px; flex: none; overflow: visible; } .clock { width: 96px; display: flex; flex-direction: column; align-items: center; padding: 3px 2px 0 0; font: 14.5px/23px "Open Sans", sans-serif; color: #fff; letter-spacing: -.1px; } .action { margin: 14px 0 0 12px; } .peek { border-left: 1px solid #777; margin-left: 22px; }
```
